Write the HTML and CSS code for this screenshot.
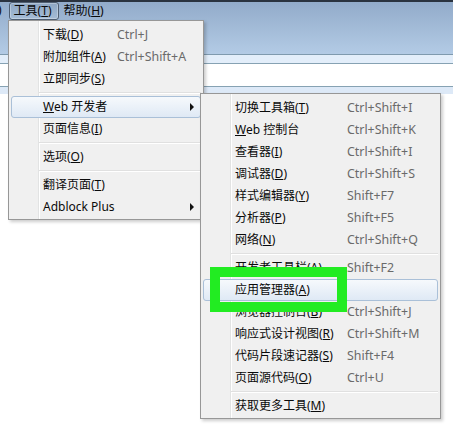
FILE: index.html
```html
<!DOCTYPE html>
<html lang="zh-CN">
<head>
  <meta charset="UTF-8">
  <meta name="viewport" content="width=device-width, initial-scale=1.0">
  <title>工具 - Web 开发者</title>
  <link rel="stylesheet" href="styles.css">
</head>
<body>
<div class="screen">
  <header class="chrome">
    <nav class="menubar">
      <span class="menubar-item menubar-clip">)</span>
      <span class="menubar-item is-open">工具(<u>T</u>)</span>
      <span class="menubar-item">帮助(<u>H</u>)</span>
    </nav>
  </header>
  <div class="strip strip-tabs"></div>
  <div class="strip strip-url"></div>
  <div class="strip strip-bookmarks"></div>

  <!-- 工具菜单 -->
  <ul class="menu menu-tools">
    <li class="menu-item"><span>下载(<u>D</u>)</span><span class="shortcut">Ctrl+J</span></li>
    <li class="menu-item"><span>附加组件(<u>A</u>)</span><span class="shortcut">Ctrl+Shift+A</span></li>
    <li class="menu-item"><span>立即同步(<u>S</u>)</span></li>
    <li class="menu-sep"></li>
    <li class="menu-item is-active"><span><u>W</u>eb 开发者</span><span></span><i class="arrow"></i></li>
    <li class="menu-item"><span>页面信息(<u>I</u>)</span></li>
    <li class="menu-sep"></li>
    <li class="menu-item"><span>选项(<u>O</u>)</span></li>
    <li class="menu-sep"></li>
    <li class="menu-item"><span>翻译页面(<u>T</u>)</span></li>
    <li class="menu-item"><span>Adblock Plus</span><span></span><i class="arrow"></i></li>
  </ul>

  <!-- Web 开发者子菜单 -->
  <ul class="menu menu-dev">
    <li class="menu-item"><span>切换工具箱(<u>T</u>)</span><span class="shortcut">Ctrl+Shift+I</span></li>
    <li class="menu-item"><span><u>W</u>eb 控制台</span><span class="shortcut">Ctrl+Shift+K</span></li>
    <li class="menu-item"><span>查看器(<u>I</u>)</span><span class="shortcut">Ctrl+Shift+I</span></li>
    <li class="menu-item"><span>调试器(<u>D</u>)</span><span class="shortcut">Ctrl+Shift+S</span></li>
    <li class="menu-item"><span>样式编辑器(<u>Y</u>)</span><span class="shortcut">Shift+F7</span></li>
    <li class="menu-item"><span>分析器(<u>P</u>)</span><span class="shortcut">Shift+F5</span></li>
    <li class="menu-item"><span>网络(<u>N</u>)</span><span class="shortcut">Ctrl+Shift+Q</span></li>
    <li class="menu-sep"></li>
    <li class="menu-item"><span>开发者工具栏(<u>A</u>)</span><span class="shortcut">Shift+F2</span></li>
    <li class="menu-item is-active"><span>应用管理器(<u>A</u>)</span></li>
    <li class="menu-item"><span>浏览器控制台(<u>B</u>)</span><span class="shortcut">Ctrl+Shift+J</span></li>
    <li class="menu-item"><span>响应式设计视图(<u>R</u>)</span><span class="shortcut">Ctrl+Shift+M</span></li>
    <li class="menu-item"><span>代码片段速记器(<u>S</u>)</span><span class="shortcut">Shift+F4</span></li>
    <li class="menu-item"><span>页面源代码(<u>O</u>)</span><span class="shortcut">Ctrl+U</span></li>
    <li class="menu-sep"></li>
    <li class="menu-item"><span>获取更多工具(<u>M</u>)</span></li>
  </ul>

  <div class="callout"></div>
</div>
</body>
</html>
```

FILE: styles.css
```css
* {
  margin: 0;
  padding: 0;
  box-sizing: border-box;
}

body {
  font-family: "Noto Sans", "Noto Sans CJK SC", sans-serif;
  font-size: 12px;
  color: #0a0a0a;
  background: #fff;
  overflow: hidden;
}

.screen {
  position: relative;
  width: 453px;
  height: 436px;
  overflow: hidden;
  background: #fff;
}

/* 窗口顶部 */
.chrome {
  height: 55px;
  border-top: 2px solid #2a3340;
  border-bottom: 1px solid #7f9aae;
  background: linear-gradient(#92abca, #b3cbe5);
}

.menubar {
  display: flex;
  align-items: center;
  height: 18px;
}

.menubar-item {
  height: 18px;
  line-height: 16px;
  padding: 0 6px 0 4px;
  border: 1px solid transparent;
  border-radius: 3px;
  white-space: nowrap;
}

.menubar-clip {
  padding: 0;
  border: 0;
  margin: 0 7px 0 -2px;
}

.menubar-item.is-open {
  border-color: #4f5f73;
  background: linear-gradient(#8ea7c4, #a5bcd6);
  box-shadow: inset 0 0 0 1px rgba(255, 255, 255, 0.3);
}

.strip-tabs {
  height: 9px;
  background: #e3eefa;
  border-bottom: 1px solid #86a2b3;
}

.strip-url {
  height: 23px;
  background: #fff;
  border-bottom: 1px solid #86a2b3;
}

.strip-bookmarks {
  height: 7px;
  background: #dde9f7;
}

/* 菜单 */
.menu {
  position: absolute;
  list-style: none;
  border: 1px solid #979797;
  padding: 3px 2px 1px;
  background: linear-gradient(to right, transparent 29px, #e2e3e3 29px, #e2e3e3 30px, #fff 30px, #fff 31px, transparent 31px), #f0f0f0;
  box-shadow: 2px 2px 3px rgba(0, 0, 0, 0.2);
}

.menu-tools {
  --label: 74px;
  left: 8px;
  top: 20px;
  width: 196px;
  z-index: 1;
}

.menu-dev {
  --label: 112px;
  left: 200px;
  top: 93px;
  width: 241px;
  z-index: 2;
}

.menu-item {
  display: grid;
  grid-template-columns: var(--label) 1fr 12px;
  align-items: center;
  height: 22px;
  line-height: 20px;
  padding-left: 31px;
  border: 1px solid transparent;
  border-radius: 3px;
  white-space: nowrap;
}

.menu-item.is-active {
  border-color: #aac0d8;
  background: linear-gradient(#f6f9fc, #dfe9f5);
}

.shortcut {
  color: #6a6a6a;
  font-size: 12.4px;
}

.arrow {
  width: 0;
  height: 0;
  margin-left: 2px;
  border-left: 4px solid #111;
  border-top: 4px solid transparent;
  border-bottom: 4px solid transparent;
}

.menu-sep {
  height: 6px;
  margin-left: 28px;
  background: linear-gradient(transparent 2px, #e0e0e0 2px, #e0e0e0 3px, #fff 3px, #fff 4px, transparent 4px);
}

/* 绿色标注框 */
.callout {
  position: absolute;
  left: 210px;
  top: 267px;
  width: 137px;
  height: 45px;
  border: 10px solid #22ec22;
  z-index: 3;
}
```
